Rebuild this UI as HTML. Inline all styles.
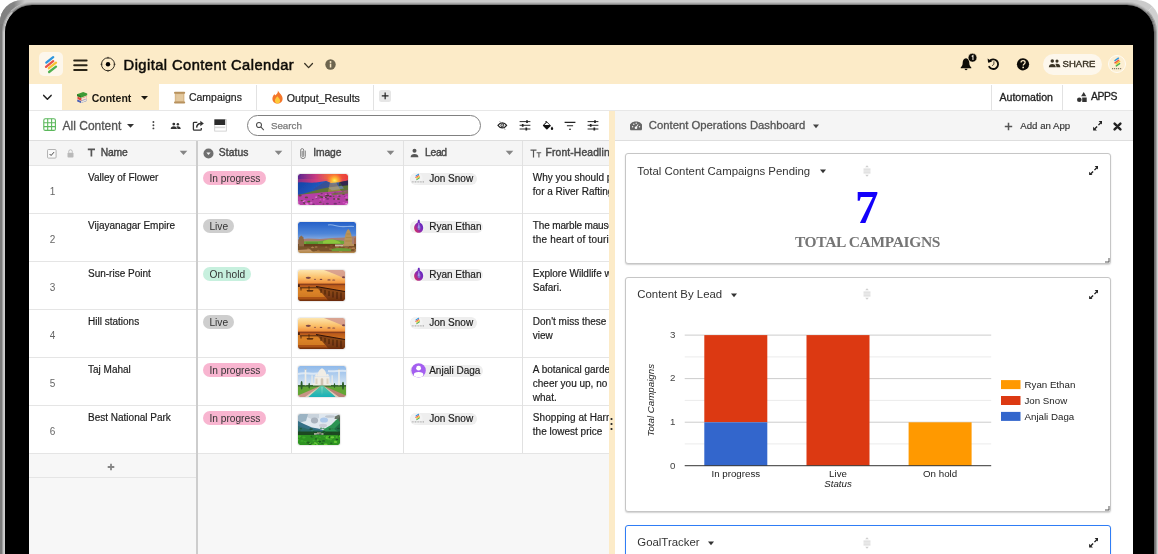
<!DOCTYPE html>
<html><head><meta charset="utf-8">
<style>
*{box-sizing:border-box;margin:0;padding:0}
html,body{width:1158px;height:554px;overflow:hidden;background:#fff}
body{font-family:"Liberation Sans",sans-serif;position:relative;color:#222}
.a{position:absolute}
.bezel{left:5px;top:5px;width:1149px;height:700px;border-radius:27px;background:#000}
.screen{left:29px;top:45px;width:1104px;height:509px;overflow:hidden;background:#fff}
.pg{left:-29px;top:-45px;width:1158px;height:554px;will-change:transform}
.t{white-space:nowrap;line-height:1}
.hd{font-size:10.600px;color:#484848;-webkit-text-stroke:.42px #484848}
.ct{font-size:10px;color:#1c1c1c;-webkit-text-stroke:.18px #1c1c1c}
.rn{font-size:10px;color:#666}
.pill{height:14px;border-radius:7px;font-size:10.200px;line-height:15.400px;text-align:center;color:#333;white-space:nowrap}
.pill.p{background:#f8b5d0}.pill.g{background:#cecece}.pill.h{background:#c7f0de}
.lp{height:12px;border-radius:6px;background:#eeeeee}
.th{left:298px;height:31px;border-radius:2px;overflow:hidden;box-shadow:0 0 1.500px rgba(0,0,0,.4)}
.av{left:410.400px;width:12px;height:12px;border-radius:6px}
.card{background:#fff;border:1px solid #c6c6c6;border-radius:3px;box-shadow:0 1px 1.500px rgba(0,0,0,.18)}
.ctt{font-size:11.4px;color:#333}
</style></head><body>
<div class="a" style="left:0;top:0;width:1159px;height:700px;border-radius:22px;border:12px solid;border-color:#cbcbcb #d0d0d0 #cbcbcb #7b7b7b"></div><div class="a" style="left:0;top:0;width:27px;height:24px;border-top-left-radius:22px 22px;background:linear-gradient(90deg,#7f7f7f 0,#858585 14px,#cbcbcb 25px)"></div><div class="a" style="left:2px;top:2px;width:1155px;height:700px;border-radius:30px;border:1px solid;border-color:#bcbcbc #a6a6a6 #bcbcbc #a0a0a0"></div><div class="a" style="left:3px;top:3px;width:1153px;height:700px;border-radius:29px;border:1px solid;border-color:#a5a5a5 #7f7f7f #a5a5a5 #c4c4c4"></div><div class="a" style="left:4px;top:4px;width:1151px;height:700px;border-radius:28px;border:1px solid;border-color:#7d7d7d #6c6c6c #7d7d7d #cdcdcd"></div>
<div class="a bezel"></div>
<svg width="0" height="0" style="position:absolute"><defs>
<filter id="b5" x="-5%" y="-5%" width="110%" height="110%"><feGaussianBlur stdDeviation=".55"/></filter>
<filter id="b9" x="-5%" y="-5%" width="110%" height="110%"><feGaussianBlur stdDeviation=".9"/></filter>
<linearGradient id="g1s" x1="0" x2="1" y1="0" y2="0"><stop offset="0" stop-color="#5c2590"/><stop offset=".35" stop-color="#c83a80"/><stop offset=".62" stop-color="#f46b3c"/><stop offset="1" stop-color="#ea3d3a"/></linearGradient>
<radialGradient id="g1sun" cx="36.600" cy="6.800" r="8.500" gradientUnits="userSpaceOnUse"><stop offset="0" stop-color="#fff27a"/><stop offset=".22" stop-color="#ffd23a"/><stop offset=".6" stop-color="#ff9a30" stop-opacity=".75"/><stop offset="1" stop-color="#f46b3c" stop-opacity="0"/></radialGradient>
<linearGradient id="g1m" x1="0" x2="1" y1="0" y2=".3"><stop offset="0" stop-color="#1443a6"/><stop offset=".5" stop-color="#2158bd"/><stop offset="1" stop-color="#4a6aa8"/></linearGradient>
<linearGradient id="g2s" x1="0" x2="0" y1="0" y2="1"><stop offset="0" stop-color="#2560c8"/><stop offset=".38" stop-color="#4f86d8"/><stop offset=".6" stop-color="#8fb0e0"/><stop offset="1" stop-color="#8fb0e0"/></linearGradient>
<linearGradient id="g3s" x1="0" x2="0" y1="0" y2="1"><stop offset="0" stop-color="#fde6b0"/><stop offset=".5" stop-color="#fbc06a"/><stop offset="1" stop-color="#ee8230"/></linearGradient>
<linearGradient id="g3w" x1="0" x2="0" y1="0" y2="1"><stop offset="0" stop-color="#b4541a"/><stop offset=".45" stop-color="#d27322"/><stop offset="1" stop-color="#93400f"/></linearGradient>
<linearGradient id="g5s" x1="0" x2="0" y1="0" y2="1"><stop offset="0" stop-color="#8fb9ea"/><stop offset="1" stop-color="#dbe8f3"/></linearGradient>
<linearGradient id="g5p" x1="0" x2="0" y1="0" y2="1"><stop offset="0" stop-color="#5fc8a8"/><stop offset="1" stop-color="#18b0b8"/></linearGradient>
</defs></svg>
<div class="a screen"><div class="a pg">
<!--HEADER-->
<div class="a" style="left:29px;top:45px;width:1104px;height:39px;background:#fcebc8"></div>
<div class="a" style="left:39px;top:52px;width:24px;height:24px;border-radius:5px;background:#fdf7ec"></div>
<svg class="a" style="left:39px;top:52px" width="24" height="24" viewBox="39 52 24 24" stroke-width="2.3" stroke-linecap="round">
<line x1="46.3" y1="62.6" x2="53.2" y2="57.2" stroke="#2e96de"/><line x1="46" y1="66.8" x2="53.2" y2="61.2" stroke="#ea5348"/>
<line x1="48.9" y1="68.2" x2="56" y2="62.6" stroke="#f8c331"/><line x1="49.1" y1="72" x2="56" y2="66.6" stroke="#4fb14f"/></svg>
<svg class="a" style="left:73px;top:59px" width="15" height="13" viewBox="0 0 15 13" stroke="#2a2416" stroke-width="2" stroke-linecap="round"><line x1="1.2" y1="1.6" x2="13.6" y2="1.6"/><line x1="1.2" y1="6.3" x2="13.6" y2="6.3"/><line x1="1.2" y1="11" x2="13.6" y2="11"/></svg>
<svg class="a" style="left:100px;top:56px" width="16" height="16" viewBox="0 0 16 16" fill="none" stroke="#1c1810" stroke-width="0.9"><circle cx="8" cy="8.3" r="6.5"/><circle cx="8" cy="8.3" r="2.2" fill="#000" stroke="none"/><path d="M8 .8v2M8 13.8v2M.5 8.3h2M13.5 8.3h2" stroke-width="0.7"/></svg>
<div class="a t" id="title" style="left:123.600px;top:57.700px;font-size:14.700px;letter-spacing:.44px;color:#0e0c08;-webkit-text-stroke:0.5px #0e0c08">Digital Content Calendar</div>
<svg class="a" style="left:303px;top:61px" width="11" height="9" viewBox="0 0 11 9" fill="none" stroke="#3a3426" stroke-width="1.3" stroke-linecap="round" stroke-linejoin="round"><path d="M1.7 2.5 5.6 6.6 9.5 2.5"/></svg>
<svg class="a" style="left:325px;top:59px" width="11" height="11" viewBox="0 0 11 11"><circle cx="5.5" cy="5.5" r="5.2" fill="#6d654f"/><rect x="4.8" y="4.6" width="1.5" height="3.9" fill="#fcebc8"/><circle cx="5.55" cy="3" r=".95" fill="#fcebc8"/></svg>
<!--bell-->
<svg class="a" style="left:958px;top:52px" width="22" height="20" viewBox="958 52 22 20"><path d="M966 58.2c-2.3.5-3.3 2.300-3.3 4.400 0 2.600-.7 3.700-2 4.800v.9h10.600v-.9c-1.300-1.100-2-2.200-2-4.800 0-2.100-1-3.900-3.300-4.400z" fill="#0d0b07"/><path d="M964.600 68.800a1.450 1.450 0 0 0 2.900 0z" fill="#0d0b07"/><circle cx="972.500" cy="57.700" r="4.400" fill="#0d0b07" stroke="#fcebc8" stroke-width=".6"/><path d="M971.700 56.500l1.250-.95v4.500" stroke="#f4efe4" stroke-width="1.050" fill="none"/></svg>
<!--history-->
<svg class="a" style="left:985px;top:56px" width="17" height="17" viewBox="985 56 17 17" fill="none" stroke="#0d0b07" stroke-width="1.850" stroke-linecap="round"><path d="M989.500 61.200a4.800 4.800 0 1 1-.3 5.500"/><path d="M987.600 58.400l.5 4.300 4-1.100z" fill="#0d0b07" stroke="none"/><path d="M993.900 61.700v2.600l-1.500 1.200" stroke-width="1" stroke="#4c4535"/></svg>
<!--help-->
<svg class="a" style="left:1016px;top:57px" width="14" height="14" viewBox="0 0 14 14"><circle cx="7" cy="7.300" r="6.100" fill="#0d0b07"/><path d="M5 5.600c0-1.300.9-2 2.050-2 1.150 0 2.050.7 2.050 1.800 0 1.500-1.900 1.500-1.900 3" stroke="#fcebc8" stroke-width="1.250" fill="none"/><circle cx="7.150" cy="10.400" r=".85" fill="#fcebc8"/></svg>
<!--share-->
<div class="a" style="left:1042.500px;top:54px;width:59.500px;height:20.700px;border-radius:11px;background:#fdf7ec"></div>
<svg class="a" style="left:1048px;top:59px" width="13" height="9" viewBox="0 0 13 9" fill="#3a3324"><circle cx="4.300" cy="2.100" r="1.750"/><circle cx="9" cy="2.100" r="1.550"/><path d="M.8 8.300c0-2.300 1.500-3.400 3.500-3.400s3.500 1.100 3.500 3.400z"/><path d="M8.400 8.300c0-1.500-.4-2.500-1.200-3.200.5-.2 1.100-.3 1.800-.3 1.900 0 3.300 1 3.300 3.500z"/></svg>
<div class="a t" id="share" style="left:1062.600px;top:59.300px;font-size:9.5px;letter-spacing:0;color:#3a3324;-webkit-text-stroke:0.4px #3a3324">SHARE</div>
<!--avatar-->
<div class="a" style="left:1108px;top:55.400px;width:18px;height:18px;border-radius:9px;background:#fcefd3;border:1px solid #fffcf4"></div>
<svg class="a" style="left:1108px;top:55px" width="18" height="18" viewBox="1108 55 18 18" stroke-width="1.500" stroke-linecap="round"><line x1="1115" y1="60.500" x2="1118.400" y2="58.200" stroke="#2e96de"/><line x1="1115" y1="62.800" x2="1118.600" y2="60.300" stroke="#ea5348"/><line x1="1116.200" y1="63.800" x2="1119.600" y2="61.400" stroke="#f8c331"/><line x1="1116.300" y1="65.900" x2="1119.600" y2="63.600" stroke="#4fb14f"/><line x1="1112" y1="68.700" x2="1122" y2="68.700" stroke="#6a6250" stroke-width="1" stroke-dasharray="1.200 .8" stroke-linecap="butt"/></svg>
<!--TABS-->
<div class="a" style="left:29px;top:84px;width:1104px;height:26px;background:#fff"></div>
<div class="a" style="left:29px;top:110px;width:1104px;height:1px;background:#e7e7e7"></div>
<svg class="a" style="left:42px;top:93px" width="11" height="9" viewBox="0 0 11 9" fill="none" stroke="#222" stroke-width="1.5" stroke-linecap="round" stroke-linejoin="round"><path d="M1.700 2.400 5.400 6.200 9.100 2.400"/></svg>
<div class="a" style="left:62px;top:84px;width:97.200px;height:26px;background:#fcebc8"></div>
<!--books emoji-->
<svg class="a" style="left:76px;top:91px" width="12" height="13" viewBox="0 0 12 13"><path d="M1 3.300 7.200.9l4 1.600v1.700L5 6.700 1 5z" fill="#3d9b35"/><path d="M1 3.300 5 5v1.700L1 5z" fill="#2c7a27"/><path d="M1.500 5.600 5.300 7.200l5.400-2v2.400L5.300 9.700 1.500 8z" fill="#d8433b"/><path d="M5.300 7.400l5.400-2v2L5.300 9.500z" fill="#efe7d8"/><path d="M1.200 8.400 5 10l5.600-2.100v2L5 12.100 1.200 10.400z" fill="#4b5fb5"/><path d="M5 10.200l5.600-2.100v1.600L5 11.900z" fill="#e9e4da"/></svg>
<div class="a t" id="tContent" style="left:91.700px;top:93px;font-size:10.5px;font-weight:700;color:#1a1710">Content</div>
<svg class="a" style="left:140px;top:95px" width="9" height="6" viewBox="0 0 9 6"><path d="M1 1h7L4.500 4.800z" fill="#1a1710"/></svg>
<!--scroll emoji-->
<svg class="a" style="left:173px;top:91px" width="13" height="13" viewBox="0 0 13 13"><rect x="1.800" y="1.200" width="9.600" height="10.800" rx="1" fill="#d9b98a"/><rect x="1" y=".8" width="11.200" height="2" rx="1" fill="#b8925e"/><rect x="1" y="10.400" width="11.200" height="2" rx="1" fill="#b8925e"/><rect x="3.200" y="3.200" width="6.800" height="6.800" fill="#e3c89d"/></svg>
<div class="a t" id="tCamp" style="left:189px;top:93px;font-size:10.46px;color:#222;-webkit-text-stroke:.2px #222">Campaigns</div>
<div class="a" style="left:255.500px;top:85px;width:1px;height:25px;background:#e2e2e2"></div>
<!--fire emoji-->
<svg class="a" style="left:271px;top:90px" width="13" height="14" viewBox="0 0 13 14"><path d="M6.800.6c.6 2.200-1.100 3.300-2.300 4.700C3.500 4.900 3.600 4 3.600 4 2.300 5.300 1.400 7 1.400 8.700c0 2.800 2.200 4.800 5.100 4.800s5.100-2 5.100-4.800c0-3.700-3.200-5-4.800-8.100z" fill="#f4772a"/><path d="M6.500 6.200c-1.400 1.500-2.600 2.700-2.600 4.500 0 1.500 1.100 2.700 2.600 2.700s2.600-1.200 2.600-2.700c0-1.800-1.400-2.800-2.600-4.500z" fill="#fdc93a"/></svg>
<div class="a t" id="tOut" style="left:286.800px;top:93px;font-size:10.62px;color:#222;-webkit-text-stroke:.2px #222">Output_Results</div>
<div class="a" style="left:373px;top:85px;width:1px;height:25px;background:#e2e2e2"></div>
<div class="a" style="left:379.300px;top:90.200px;width:11.700px;height:11.500px;border-radius:2.500px;background:#e6e6e6"></div>
<svg class="a" style="left:380px;top:91px" width="10" height="10" viewBox="0 0 10 10" stroke="#222" stroke-width="1.200"><path d="M5.150 1.600v6.700M1.800 4.950h6.700"/></svg>
<div class="a" style="left:991px;top:85px;width:1px;height:25px;background:#e2e2e2"></div>
<div class="a" style="left:1061.500px;top:85px;width:1px;height:25px;background:#e2e2e2"></div>
<div class="a t" id="tAuto" style="left:999.500px;top:92.300px;font-size:10.57px;color:#222;-webkit-text-stroke:.3px #222">Automation</div>
<svg class="a" style="left:1076px;top:91px" width="12" height="12" viewBox="0 0 12 12" fill="#333"><path d="M7.700 1 10.300 5.200H5.100z"/><circle cx="3.300" cy="8.700" r="2.300"/><rect x="6.200" y="6.500" width="4.500" height="4.500"/></svg>
<div class="a t" id="tApps" style="left:1091px;top:92.300px;font-size:10.400px;color:#222;letter-spacing:-.42px;-webkit-text-stroke:.3px #222">APPS</div>
<!--TOOLBAR-->
<div class="a" style="left:29px;top:111px;width:581px;height:29px;background:#fff"></div>
<div class="a" style="left:29px;top:140px;width:581px;height:1px;background:#dedede"></div>
<svg class="a" style="left:43px;top:118px" width="13" height="13" viewBox="0 0 13 13" fill="none" stroke="#5cb85c" stroke-width="1.100"><rect x=".8" y=".8" width="11.600" height="11.600" rx="1.500"/><path d="M4.700.8v11.600M8.600.8v11.600M.8 4.700h11.600M.8 8.600h11.600"/></svg>
<div class="a t" id="allc" style="left:62.600px;top:119.500px;font-size:12px;color:#555;-webkit-text-stroke:.3px #555">All Content</div>
<svg class="a" style="left:125.500px;top:122.500px" width="9" height="6" viewBox="0 0 9 6"><path d="M1 1h7L4.500 4.800z" fill="#333"/></svg>
<svg class="a" style="left:151px;top:119px" width="5" height="12" viewBox="0 0 5 12" fill="#444"><circle cx="2.400" cy="3" r=".95"/><circle cx="2.400" cy="6.200" r=".95"/><circle cx="2.400" cy="9.400" r=".95"/></svg>
<svg class="a" style="left:170px;top:121.500px" width="11.500" height="8" viewBox="0 0 13 9" fill="#333"><circle cx="4.300" cy="2.300" r="1.600"/><circle cx="8.900" cy="2.500" r="1.400"/><path d="M.8 8c0-2.100 1.500-3.100 3.500-3.100s3.500 1 3.500 3.100z"/><path d="M8.400 8c0-1.300-.4-2.200-1.100-2.900.4-.2 1-.3 1.600-.3 1.800 0 3.200.9 3.200 3.200z"/></svg>
<svg class="a" style="left:192px;top:118.500px" width="13" height="13" viewBox="0 0 13 13" fill="none" stroke="#333" stroke-width="1.300"><path d="M5.300 3.300H2.300a.9.900 0 0 0-.9.900v6.100a.9.900 0 0 0 .9.900h6.100a.9.900 0 0 0 .9-.9V9"/><path d="M4.600 8.600c.2-2.600 1.700-4.100 4.300-4.200" stroke-width="1.500"/><path d="M8.300 1.700 11.800 4.500 8.300 7.300z" fill="#333" stroke="none"/></svg>
<svg class="a" style="left:214px;top:119px" width="13" height="13" viewBox="0 0 13 13"><rect x=".7" y=".6" width="11.600" height="11.500" fill="#fff" stroke="#c9c9c9" stroke-width=".8"/><rect x=".4" y=".4" width="10.800" height="5.600" fill="#2b2b2b"/><rect x=".7" y="7.600" width="10.500" height="1.600" fill="#d9d9d9"/></svg>
<div class="a" style="left:246.600px;top:114.700px;width:234.600px;height:21.500px;border-radius:11px;border:1.700px solid #808080;background:#fff"></div>
<svg class="a" style="left:254.500px;top:120.500px" width="10" height="10" viewBox="0 0 10 10" fill="none" stroke="#4a4a4a" stroke-width="1.050"><circle cx="4" cy="4" r="2.500"/><path d="M6 6.100 8.600 8.800" stroke-linecap="round"/></svg>
<div class="a t" id="srch" style="left:270.900px;top:120.500px;font-size:9.8px;color:#7a7a7a;-webkit-text-stroke:.25px #7a7a7a">Search</div>
<!--eye slash-->
<svg class="a" style="left:497px;top:119px" width="11" height="12" viewBox="0 0 11 12" fill="none" stroke="#222"><path d="M1 6.300C2.200 4.500 3.700 3.800 5.300 3.800S8.400 4.500 9.600 6.300C8.400 8.100 6.900 8.800 5.300 8.800S2.200 8.100 1 6.300z" stroke-width="1.200"/><circle cx="5.300" cy="6.300" r="1.400" stroke-width="1"/><path d="M2.600 2 8.300 11" stroke-width=".6" stroke="#777"/></svg>
<svg class="a sl" style="left:519px;top:120px" width="12" height="11" viewBox="0 0 12 11" stroke="#222" fill="none"><path d="M.6 1.600h10.800M.6 5.300h10.800M.6 9h10.800" stroke-width=".95"/><path d="M8 .2v2.800M3.700 3.900v2.800M7.300 7.600v2.800" stroke-width="1.700"/></svg>
<svg class="a" style="left:541.500px;top:120px" width="12" height="11" viewBox="0 0 12 11"><path d="M4.300 1 9 5.700 5.400 9.300a.8.800 0 0 1-1.100 0L1.100 6.100a.8.800 0 0 1 0-1.100L4 2.100 3 1.100z" fill="#111"/><path d="M2.300 5h5.200L4.900 2.500z" fill="#fff"/><path d="M10 6.600s1.200 1.400 1.200 2.200a1.200 1.200 0 0 1-2.400 0c0-.8 1.200-2.200 1.200-2.200z" fill="#111"/></svg>
<svg class="a" style="left:564px;top:120px" width="12" height="11" viewBox="0 0 12 11" stroke="#222" stroke-width="1.100" fill="none"><path d="M.6 2.400h10.800M2.900 5.800h6.200M5 9.200h2"/></svg>
<svg class="a sl" style="left:586.500px;top:120px" width="12" height="11" viewBox="0 0 12 11" stroke="#222" fill="none"><path d="M.6 1.600h10.800M.6 5.300h10.800M.6 9h10.800" stroke-width=".95"/><path d="M8 .2v2.800M3.700 3.900v2.800M7.300 7.600v2.800" stroke-width="1.700"/></svg>
<!--TABLE-->
<div class="a" style="left:29px;top:141px;width:581px;height:413px;background:#f7f7f7"></div>
<div class="a" style="left:29px;top:141px;width:581px;height:24px;background:#f5f5f5"></div>
<div class="a" style="left:29px;top:165px;width:581px;height:288px;background:#fff"></div>
<div class="a" style="left:29px;top:165px;width:581px;height:1px;background:#e5e5e5"></div>
<div class="a" style="left:29px;top:213px;width:581px;height:1px;background:#e5e5e5"></div>
<div class="a" style="left:29px;top:261px;width:581px;height:1px;background:#e5e5e5"></div>
<div class="a" style="left:29px;top:309px;width:581px;height:1px;background:#e5e5e5"></div>
<div class="a" style="left:29px;top:357px;width:581px;height:1px;background:#e5e5e5"></div>
<div class="a" style="left:29px;top:405px;width:581px;height:1px;background:#e5e5e5"></div>
<div class="a" style="left:29px;top:453px;width:581px;height:1px;background:#e5e5e5"></div>
<div class="a" style="left:29px;top:477px;width:168px;height:1px;background:#e5e5e5"></div>
<div class="a" style="left:290.5px;top:141px;width:1px;height:312px;background:#e1e1e1"></div>
<div class="a" style="left:403px;top:141px;width:1px;height:312px;background:#e1e1e1"></div>
<div class="a" style="left:522px;top:141px;width:1px;height:312px;background:#e1e1e1"></div>
<div class="a" style="left:196px;top:141px;width:2px;height:413px;background:#cdcdcd"></div>
<svg class="a" style="left:47px;top:148.800px" width="9.800" height="9.800" viewBox="0 0 11 11" fill="none"><rect x=".6" y=".6" width="9.600" height="9.600" rx="1" stroke="#a9a9a9" stroke-width="1" fill="#fafafa"/><path d="M2.900 5.600 4.600 7.300 7.900 3.500" stroke="#444" stroke-width="1.100"/></svg>
<svg class="a" style="left:66.500px;top:149px" width="7" height="9" viewBox="0 0 7 9"><rect x=".5" y="3.700" width="6" height="4.800" rx=".8" fill="#b9b9b9"/><path d="M1.700 3.700V2.600a1.800 1.800 0 0 1 3.600 0v1.100" stroke="#b9b9b9" stroke-width="1" fill="none"/></svg>
<svg class="a" style="left:86.500px;top:148.300px" width="9" height="9" viewBox="0 0 9 9" stroke="#555" stroke-width="1.700" fill="none"><path d="M.8 1.300h7.200M4.400 1.300v7.200"/></svg>
<div class="a t hd" id="hName" style="font-size:10.300px;letter-spacing:-0.2px;left:100.800px;top:147.500px">Name</div>
<svg class="a" style="left:178.500px;top:149.800px" width="9" height="6" viewBox="0 0 9 6"><path d="M.7.800h7.600L4.500 5z" fill="#858585"/></svg>
<svg class="a" style="left:203px;top:148px" width="11" height="11" viewBox="0 0 11 11"><circle cx="5.500" cy="5.500" r="5" fill="#6f6f6f"/><path d="M3.400 4.600h4.200L5.500 7z" fill="#f5f5f5"/></svg>
<div class="a t hd" id="hStatus" style="font-size:10.300px;letter-spacing:0.11px;left:218.700px;top:147.500px">Status</div>
<svg class="a" style="left:273.500px;top:149.800px" width="9" height="6" viewBox="0 0 9 6"><path d="M.7.800h7.600L4.500 5z" fill="#858585"/></svg>
<svg class="a" style="left:299px;top:147px" width="8" height="13" viewBox="0 0 8 13" fill="none" stroke="#777" stroke-width=".9"><path d="M6.300 3.600v5.700a2.300 2.300 0 0 1-4.600 0V3.100a1.500 1.500 0 0 1 3 0v5.700a.75.750 0 0 1-1.500 0V3.900"/></svg>
<div class="a t hd" id="hImage" style="font-size:10.300px;letter-spacing:-0.13px;left:313.300px;top:147.500px">Image</div>
<svg class="a" style="left:385.500px;top:149.800px" width="9" height="6" viewBox="0 0 9 6"><path d="M.7.800h7.600L4.500 5z" fill="#858585"/></svg>
<svg class="a" style="left:410px;top:148px" width="9" height="10" viewBox="0 0 9 10" fill="#555"><circle cx="4.500" cy="2.800" r="2"/><path d="M.6 9.200c0-2.300 1.700-3.300 3.900-3.300s3.900 1 3.900 3.300z"/></svg>
<div class="a t hd" id="hLead" style="font-size:10.300px;letter-spacing:-0.28px;left:425px;top:147.500px">Lead</div>
<svg class="a" style="left:505px;top:149.800px" width="9" height="6" viewBox="0 0 9 6"><path d="M.7.800h7.600L4.500 5z" fill="#858585"/></svg>
<svg class="a" style="left:530px;top:149px" width="12" height="9" viewBox="0 0 12 9" stroke="#555" fill="none"><path d="M.5 1.200h6M3.500 1.200v7.300" stroke-width="1.200"/><path d="M6.600 3.800h4.600M8.900 3.800v4.700" stroke-width="1.100"/></svg>
<div class="a t hd" id="hFront" style="font-size:10.300px;letter-spacing:.15px;left:545.500px;top:147.500px">Front-Headline</div>
<div class="a t rn" style="left:46px;top:187.4px;width:13px;text-align:center">1</div>
<div class="a t ct" id="n0" style="left:88px;top:172.9px">Valley of Flower</div>
<div class="a pill p" style="left:203.300px;top:171.3px;width:63.2px"><span id="s0">In progress</span></div>
<div class="a th" id="th0" style="top:174px;width:50px"><svg width="50" height="31" viewBox="0 0 50 31" style="display:block;border-radius:2px"><g filter="url(#b5)"><rect width="50" height="31" fill="url(#g1s)"/><rect y="5" width="50" height="6" fill="#d6457a" opacity=".35"/><rect width="50" height="16" fill="url(#g1sun)"/>
<path d="M0 8.500C6 8 12 9 18 8.500L28 7 33 9 50 7.500V21H0z" fill="url(#g1m)"/>
<path d="M14 16 28 7 35 10.500 50 7V14L30 15z" fill="#3b4f8c" opacity=".8"/><path d="M41 8.500 50 6.500V19l-9-3z" fill="#3a4a2c" opacity=".85"/><path d="M42 8 50 6.500V11l-6 .8z" fill="#33284f"/>
<path d="M0 21C10 19 20 15 30 13.500L50 11.500V22H0z" fill="#5f7434"/><path d="M30 13.500 44 11.800 46 14.500 34 16.500z" fill="#6d86b8" opacity=".75"/>
<path d="M32 8 37 6.500 43 17 30 18z" fill="#f4b64a" opacity=".35"/>
<path d="M0 20.800C12 20 24 18 50 16.500V31H0z" fill="#b540a4"/>
<ellipse cx="6.7" cy="29.5" rx="1.4" ry="0.8" fill="#5a4a34" opacity="0.85"/><ellipse cx="5.9" cy="28.6" rx="1.2" ry="0.7" fill="#6b2f68" opacity="0.85"/><ellipse cx="39.4" cy="19.2" rx="0.7" ry="0.4" fill="#6b2f68" opacity="0.85"/><ellipse cx="21.6" cy="28.3" rx="0.7" ry="0.4" fill="#3f3a2a" opacity="0.85"/><ellipse cx="13.3" cy="28.9" rx="1.3" ry="0.7" fill="#f28be6" opacity="0.85"/><ellipse cx="45.1" cy="17.9" rx="0.7" ry="0.4" fill="#e76ad8" opacity="0.85"/><ellipse cx="47.0" cy="22.5" rx="0.9" ry="0.5" fill="#6b2f68" opacity="0.85"/><ellipse cx="36.3" cy="25.0" rx="1.4" ry="0.8" fill="#3f3a2a" opacity="0.85"/><ellipse cx="27.6" cy="23.2" rx="1.4" ry="0.8" fill="#3f3a2a" opacity="0.85"/><ellipse cx="47.6" cy="30.0" rx="1.1" ry="0.6" fill="#f28be6" opacity="0.85"/><ellipse cx="9.3" cy="30.9" rx="1.5" ry="0.9" fill="#f28be6" opacity="0.85"/><ellipse cx="37.2" cy="29.7" rx="1.7" ry="0.9" fill="#6b2f68" opacity="0.85"/><ellipse cx="25.4" cy="29.9" rx="0.9" ry="0.5" fill="#5a4a34" opacity="0.85"/><ellipse cx="29.4" cy="29.6" rx="1.5" ry="0.9" fill="#6b2f68" opacity="0.85"/><ellipse cx="29.5" cy="19.3" rx="0.9" ry="0.5" fill="#6b2f68" opacity="0.85"/><ellipse cx="20.7" cy="21.6" rx="1.2" ry="0.7" fill="#4f5a2c" opacity="0.85"/><ellipse cx="4.3" cy="27.7" rx="0.8" ry="0.5" fill="#b335a6" opacity="0.85"/><ellipse cx="26.0" cy="23.8" rx="1.2" ry="0.7" fill="#e76ad8" opacity="0.85"/><ellipse cx="23.5" cy="23.0" rx="1.5" ry="0.9" fill="#6b2f68" opacity="0.85"/><ellipse cx="32.4" cy="20.7" rx="0.9" ry="0.5" fill="#e76ad8" opacity="0.85"/><ellipse cx="38.5" cy="25.0" rx="1.5" ry="0.9" fill="#d94fc9" opacity="0.85"/><ellipse cx="20.2" cy="23.6" rx="1.5" ry="0.9" fill="#4f5a2c" opacity="0.85"/><ellipse cx="23.0" cy="22.5" rx="1.2" ry="0.7" fill="#e76ad8" opacity="0.85"/><ellipse cx="19.2" cy="29.4" rx="1.6" ry="0.9" fill="#b335a6" opacity="0.85"/><ellipse cx="25.9" cy="25.8" rx="1.1" ry="0.6" fill="#e76ad8" opacity="0.85"/><ellipse cx="24.1" cy="23.6" rx="1.2" ry="0.7" fill="#6b2f68" opacity="0.85"/><ellipse cx="24.2" cy="23.5" rx="1.0" ry="0.6" fill="#4f5a2c" opacity="0.85"/><ellipse cx="22.9" cy="19.8" rx="0.9" ry="0.5" fill="#b335a6" opacity="0.85"/><ellipse cx="27.5" cy="21.2" rx="0.8" ry="0.5" fill="#5a4a34" opacity="0.85"/><ellipse cx="1.6" cy="30.5" rx="0.8" ry="0.4" fill="#e76ad8" opacity="0.85"/><ellipse cx="22.6" cy="28.2" rx="1.0" ry="0.6" fill="#5a4a34" opacity="0.85"/><ellipse cx="5.5" cy="27.3" rx="1.0" ry="0.6" fill="#f28be6" opacity="0.85"/><ellipse cx="8.4" cy="23.4" rx="1.6" ry="0.9" fill="#5a4a34" opacity="0.85"/><ellipse cx="32.4" cy="22.2" rx="1.4" ry="0.8" fill="#3f3a2a" opacity="0.85"/><ellipse cx="23.7" cy="19.6" rx="1.1" ry="0.6" fill="#6b2f68" opacity="0.85"/><ellipse cx="39.8" cy="21.3" rx="0.9" ry="0.5" fill="#d94fc9" opacity="0.85"/><ellipse cx="48.3" cy="23.1" rx="1.7" ry="0.9" fill="#d94fc9" opacity="0.85"/><ellipse cx="0.9" cy="22.8" rx="1.4" ry="0.8" fill="#b335a6" opacity="0.85"/><ellipse cx="22.3" cy="25.3" rx="1.1" ry="0.6" fill="#d94fc9" opacity="0.85"/><ellipse cx="48.8" cy="25.9" rx="1.4" ry="0.8" fill="#3f3a2a" opacity="0.85"/><ellipse cx="11.2" cy="27.3" rx="1.1" ry="0.6" fill="#4f5a2c" opacity="0.85"/><ellipse cx="33.0" cy="23.8" rx="1.4" ry="0.8" fill="#b335a6" opacity="0.85"/><ellipse cx="48.4" cy="29.3" rx="1.0" ry="0.6" fill="#f28be6" opacity="0.85"/><ellipse cx="15.5" cy="30.3" rx="1.4" ry="0.8" fill="#6b2f68" opacity="0.85"/><ellipse cx="28.2" cy="20.5" rx="1.2" ry="0.7" fill="#e76ad8" opacity="0.85"/><ellipse cx="29.5" cy="21.5" rx="1.6" ry="0.9" fill="#3f3a2a" opacity="0.85"/><ellipse cx="8.6" cy="29.6" rx="1.7" ry="0.9" fill="#e76ad8" opacity="0.85"/><ellipse cx="18.9" cy="23.7" rx="0.9" ry="0.5" fill="#6b2f68" opacity="0.85"/><ellipse cx="29.6" cy="24.8" rx="1.6" ry="0.9" fill="#6b2f68" opacity="0.85"/><ellipse cx="14.8" cy="25.6" rx="1.0" ry="0.6" fill="#6b2f68" opacity="0.85"/><ellipse cx="45.0" cy="17.7" rx="0.9" ry="0.5" fill="#4f5a2c" opacity="0.85"/><ellipse cx="40.6" cy="25.3" rx="0.8" ry="0.5" fill="#6b2f68" opacity="0.85"/><ellipse cx="10.7" cy="27.6" rx="1.5" ry="0.9" fill="#4f5a2c" opacity="0.85"/><ellipse cx="45.7" cy="28.8" rx="1.2" ry="0.7" fill="#d94fc9" opacity="0.85"/><ellipse cx="3.3" cy="21.6" rx="0.8" ry="0.5" fill="#b335a6" opacity="0.85"/><ellipse cx="45.5" cy="20.3" rx="1.4" ry="0.8" fill="#5a4a34" opacity="0.85"/><ellipse cx="18.4" cy="23.6" rx="1.0" ry="0.6" fill="#3f3a2a" opacity="0.85"/><ellipse cx="6.8" cy="26.5" rx="0.8" ry="0.5" fill="#e76ad8" opacity="0.85"/><ellipse cx="20.3" cy="24.0" rx="1.7" ry="1.0" fill="#b335a6" opacity="0.85"/><ellipse cx="41.4" cy="22.3" rx="1.3" ry="0.7" fill="#6b2f68" opacity="0.85"/><ellipse cx="3.8" cy="26.6" rx="1.3" ry="0.7" fill="#5a4a34" opacity="0.85"/><ellipse cx="18.2" cy="23.2" rx="1.2" ry="0.7" fill="#f28be6" opacity="0.85"/><ellipse cx="22.9" cy="22.6" rx="1.5" ry="0.8" fill="#5a4a34" opacity="0.85"/><ellipse cx="0.6" cy="27.9" rx="0.8" ry="0.5" fill="#f28be6" opacity="0.85"/><ellipse cx="41.3" cy="28.2" rx="0.9" ry="0.5" fill="#6b2f68" opacity="0.85"/><ellipse cx="8.1" cy="25.4" rx="1.4" ry="0.8" fill="#b335a6" opacity="0.85"/><ellipse cx="37.2" cy="19.5" rx="1.6" ry="0.9" fill="#6b2f68" opacity="0.85"/><ellipse cx="40.3" cy="25.0" rx="1.5" ry="0.9" fill="#5a4a34" opacity="0.85"/><ellipse cx="35.6" cy="22.3" rx="0.9" ry="0.5" fill="#4f5a2c" opacity="0.85"/><ellipse cx="2.0" cy="21.4" rx="1.7" ry="1.0" fill="#5a4a34" opacity="0.85"/><path d="M33 19.500l17-2.500v2.500l-15 1.800z" fill="#6f7a3a" opacity=".75"/></g></svg></div>
<div class="a lp" style="left:410.400px;top:172.8px;width:66.3px"></div><div class="a t ct" id="l0" style="left:429.200px;top:173.5px">Jon Snow</div>
<svg class="a" style="left:410px;top:172px" width="15" height="14" viewBox="410 172 15 14"><circle cx="416.600" cy="178.8" r="6" fill="#f3f3f3"/><g stroke-width="1.050" stroke-linecap="round"><line x1="416" y1="175.9" x2="418.600" y2="174.2" stroke="#2e96de"/><line x1="415.900" y1="177.4" x2="418.700" y2="175.6" stroke="#ea5348"/><line x1="416.700" y1="178.2" x2="419.400" y2="176.5" stroke="#f8c331"/><line x1="416.800" y1="179.6" x2="419.400" y2="177.9" stroke="#4fb14f"/></g><line x1="411.800" y1="181.9" x2="424" y2="181.9" stroke="#8a8a8a" stroke-width=".8" stroke-dasharray="1 .600"/></svg>
<div class="a t ct" id="f0_0" style="left:532.800px;top:173.00px">Why you should plan</div>
<div class="a t ct" id="f0_1" style="left:532.800px;top:186.85px">for a River Rafting</div>
<div class="a t rn" style="left:46px;top:235.4px;width:13px;text-align:center">2</div>
<div class="a t ct" id="n1" style="left:88px;top:220.9px">Vijayanagar Empire</div>
<div class="a pill g" style="left:203.300px;top:219.3px;width:31px"><span id="s1">Live</span></div>
<div class="a th" id="th1" style="top:222px;width:58px"><svg width="58" height="31" viewBox="0 0 58 31" style="display:block;border-radius:2px"><g filter="url(#b5)"><rect width="58" height="31" fill="url(#g2s)"/><path d="M30 3c4-1 8 1 12 1.500 5 .6 9-.5 14 0" stroke="#9fc0ee" stroke-width="1.100" fill="none" opacity=".8"/>
<path d="M0 17.500 10 16.500 22 17 34 16 46 15.500 58 14V22H0z" fill="#a77f72"/>
<path d="M5 19.500C12 18.500 20 20 26 18.500 32 17 40 18 46 19V23H5z" fill="#6aa838"/><path d="M25 19.500c3-2 8-2.500 12-1.500 3 .8 5 1.800 6 3.500H25z" fill="#8cc63c"/><path d="M8 20.300h12v2H8z" fill="#4f8f2c" opacity=".7"/>
<rect y="22" width="58" height="9" fill="#7a522c"/><rect y="22" width="58" height="2.500" fill="#68401f"/>
<ellipse cx="55.4" cy="30.1" rx="0.9" ry="0.5" fill="#8a5530" opacity="0.7"/><ellipse cx="20.9" cy="24.7" rx="1.9" ry="1.1" fill="#7a4a2a" opacity="0.7"/><ellipse cx="14.6" cy="25.0" rx="0.9" ry="0.5" fill="#b07a45" opacity="0.7"/><ellipse cx="58.0" cy="28.0" rx="1.9" ry="1.1" fill="#c0905a" opacity="0.7"/><ellipse cx="55.1" cy="27.3" rx="1.4" ry="0.8" fill="#7a4a2a" opacity="0.7"/><ellipse cx="52.3" cy="29.6" rx="1.3" ry="0.7" fill="#7a4a2a" opacity="0.7"/><ellipse cx="52.6" cy="26.5" rx="2.0" ry="1.1" fill="#b07a45" opacity="0.7"/><ellipse cx="32.5" cy="25.2" rx="0.9" ry="0.5" fill="#7a4a2a" opacity="0.7"/><ellipse cx="10.1" cy="27.1" rx="1.3" ry="0.7" fill="#c0905a" opacity="0.7"/><ellipse cx="39.1" cy="24.8" rx="2.0" ry="1.1" fill="#a8703c" opacity="0.7"/><ellipse cx="42.6" cy="29.8" rx="1.8" ry="1.0" fill="#c0905a" opacity="0.7"/><ellipse cx="20.5" cy="30.4" rx="2.1" ry="1.2" fill="#b07a45" opacity="0.7"/><ellipse cx="55.4" cy="26.3" rx="1.8" ry="1.0" fill="#c0905a" opacity="0.7"/><ellipse cx="14.5" cy="25.5" rx="1.5" ry="0.8" fill="#c0905a" opacity="0.7"/><ellipse cx="48.2" cy="26.0" rx="2.0" ry="1.1" fill="#a8703c" opacity="0.7"/><ellipse cx="20.3" cy="28.6" rx="1.5" ry="0.9" fill="#a8703c" opacity="0.7"/><ellipse cx="28.2" cy="25.1" rx="1.2" ry="0.7" fill="#b07a45" opacity="0.7"/><ellipse cx="50.8" cy="27.8" rx="1.8" ry="1.0" fill="#a8703c" opacity="0.7"/><ellipse cx="18.0" cy="30.2" rx="1.7" ry="1.0" fill="#c0905a" opacity="0.7"/><ellipse cx="32.6" cy="27.1" rx="1.6" ry="0.9" fill="#a8703c" opacity="0.7"/><ellipse cx="18.1" cy="25.0" rx="1.5" ry="0.8" fill="#c0905a" opacity="0.7"/><ellipse cx="51.2" cy="29.0" rx="1.3" ry="0.7" fill="#8a5530" opacity="0.7"/><ellipse cx="52.6" cy="24.8" rx="1.8" ry="1.0" fill="#8a5530" opacity="0.7"/><ellipse cx="33.3" cy="23.8" rx="1.6" ry="0.9" fill="#8a5530" opacity="0.7"/><ellipse cx="43.8" cy="24.5" rx="1.2" ry="0.7" fill="#b07a45" opacity="0.7"/><ellipse cx="54.7" cy="23.9" rx="2.0" ry="1.1" fill="#8a5530" opacity="0.7"/><path d="M0 31V28L12 27.200 16 31z" fill="#c09565"/><path d="M33 27c5-1.500 12-1.500 20 0v2.300H34z" fill="#6c9a35"/><path d="M37 22.500h14v1.800H37z" fill="#d8cdb8" opacity=".85"/><path d="M0 29.500h58V31H0z" fill="#b68a4e"/>
<path d="M46.500 24V17l1-5 1.300-3.300 1.500-1.600 1.500 1.600 1.300 3.300 1 5v7z" fill="#b8935a"/><path d="M48.500 12h4M47.800 15.500h5.600M47.300 19h6.500" stroke="#a8853f" stroke-width=".7"/><path d="M45 24h11v-2H45z" fill="#b8915a"/>
<path d="M.6 24.500V18l.8-2.700L3.300 13.600l1.900 1.700.8 2.700v6.500z" fill="#8f6a45"/><path d="M56 16.500 58 15v7h-2z" fill="#a86a4e"/></g></svg></div>
<div class="a lp" style="left:410.400px;top:220.8px;width:72.5px"></div><div class="a t ct" id="l1" style="left:429.200px;top:221.5px">Ryan Ethan</div>
<svg class="a" style="left:411px;top:219px" width="14" height="15" viewBox="0 0 14 15"><defs><linearGradient id="ry213" x1="0" x2="1" y1="1" y2="0"><stop offset="0" stop-color="#e8324e"/><stop offset=".45" stop-color="#8a2ab4"/><stop offset="1" stop-color="#4a2ac8"/></linearGradient></defs><circle cx="7.600" cy="7.900" r="6" fill="#f3f3f3"/><path d="M6.900 1.200c.5-.6 1.400-.6 1.800 0l.2 2.200c2 .9 3.300 3 3.300 5.300 0 3-2 5-4.500 5s-4.600-2-4.600-5c0-2.300 1.400-4.300 3.500-5.300z" fill="url(#ry213)"/><ellipse cx="8" cy="8.600" rx="1.500" ry="2.600" fill="#7ab0f0" opacity=".55"/><path d="M7.800 4v5" stroke="#e8d8ff" stroke-width=".7" opacity=".8"/></svg>
<div class="a t ct" id="f1_0" style="letter-spacing:-.15px;left:532.800px;top:221.00px">The marble mausoleum</div>
<div class="a t ct" id="f1_1" style="letter-spacing:.18px;left:532.800px;top:234.85px">the heart of tourism</div>
<div class="a t rn" style="left:46px;top:283.4px;width:13px;text-align:center">3</div>
<div class="a t ct" id="n2" style="left:88px;top:268.9px">Sun-rise Point</div>
<div class="a pill h" style="left:203.300px;top:267.3px;width:48px"><span id="s2">On hold</span></div>
<div class="a th" id="th2" style="top:270px;width:47px"><svg width="47" height="31" viewBox="0 0 47 31" style="display:block;border-radius:2px"><g filter="url(#b5)"><rect width="47" height="15" fill="url(#g3s)"/><path d="M26 0H47V9C42 6 34 3 26 0z" fill="#cf948c" opacity=".8"/>
<g fill="#6a3540" opacity=".85"><ellipse cx="10.300" cy="7.800" rx="2.600" ry="1.100"/><ellipse cx="23" cy="9.400" rx="1.300" ry=".6"/><ellipse cx="31" cy="9.900" rx="1.700" ry=".7"/><ellipse cx="35.700" cy="10" rx="1.600" ry=".6"/><ellipse cx="45.500" cy="7.300" rx="1.500" ry="1"/><ellipse cx="17" cy="9.200" rx="1" ry=".5"/></g>
<rect y="14" width="47" height="17" fill="url(#g3w)"/><rect y="13.600" width="47" height="1.500" fill="#8c3f1a"/>
<path d="M0 17h20l10 14H0z" fill="#e08a2a" opacity=".7"/><path d="M0 27H27L30 31H0z" fill="#9a3f10" opacity=".65"/>
<path d="M18 16.500 47 21.500V31H31z" fill="#5a2a10" opacity=".62"/><path d="M18 16.500 47 21.500" stroke="#2f1206" stroke-width="1"/><path d="M0 29.500h47V31H0z" fill="#6a2a0c" opacity=".8"/><path d="M2 17.800H20" stroke="#3a1a0c" stroke-width=".9"/><path d="M8.500 20.200h7l-.8 1.300H9.300z" fill="#3a1608"/><path d="M11 16v4.300" stroke="#3a1608" stroke-width=".6"/>
<path d="M23 19v4M27 20v4.500M31 21v5M35 21.500v6M39 22v7M43 22.500v7" stroke="#3a1808" stroke-width="1" opacity=".85"/><path d="M0 14.500h1.800v2.500H0z" fill="#4a200c"/><path d="M3 18v2.500" stroke="#3a1608" stroke-width=".8"/></g></svg></div>
<div class="a lp" style="left:410.400px;top:268.8px;width:72.5px"></div><div class="a t ct" id="l2" style="left:429.200px;top:269.5px">Ryan Ethan</div>
<svg class="a" style="left:411px;top:267px" width="14" height="15" viewBox="0 0 14 15"><defs><linearGradient id="ry261" x1="0" x2="1" y1="1" y2="0"><stop offset="0" stop-color="#e8324e"/><stop offset=".45" stop-color="#8a2ab4"/><stop offset="1" stop-color="#4a2ac8"/></linearGradient></defs><circle cx="7.600" cy="7.900" r="6" fill="#f3f3f3"/><path d="M6.900 1.200c.5-.6 1.400-.6 1.800 0l.2 2.200c2 .9 3.300 3 3.300 5.300 0 3-2 5-4.500 5s-4.600-2-4.600-5c0-2.300 1.400-4.300 3.500-5.300z" fill="url(#ry261)"/><ellipse cx="8" cy="8.600" rx="1.500" ry="2.600" fill="#7ab0f0" opacity=".55"/><path d="M7.800 4v5" stroke="#e8d8ff" stroke-width=".7" opacity=".8"/></svg>
<div class="a t ct" id="f2_0" style="left:532.800px;top:269.00px">Explore Wildlife with</div>
<div class="a t ct" id="f2_1" style="left:532.800px;top:282.85px">Safari.</div>
<div class="a t rn" style="left:46px;top:331.4px;width:13px;text-align:center">4</div>
<div class="a t ct" id="n3" style="left:88px;top:316.9px">Hill stations</div>
<div class="a pill g" style="left:203.300px;top:315.3px;width:31px"><span id="s3">Live</span></div>
<div class="a th" id="th3" style="top:318px;width:47px"><svg width="47" height="31" viewBox="0 0 47 31" style="display:block;border-radius:2px"><g filter="url(#b5)"><rect width="47" height="15" fill="url(#g3s)"/><path d="M26 0H47V9C42 6 34 3 26 0z" fill="#cf948c" opacity=".8"/>
<g fill="#6a3540" opacity=".85"><ellipse cx="10.300" cy="7.800" rx="2.600" ry="1.100"/><ellipse cx="23" cy="9.400" rx="1.300" ry=".6"/><ellipse cx="31" cy="9.900" rx="1.700" ry=".7"/><ellipse cx="35.700" cy="10" rx="1.600" ry=".6"/><ellipse cx="45.500" cy="7.300" rx="1.500" ry="1"/><ellipse cx="17" cy="9.200" rx="1" ry=".5"/></g>
<rect y="14" width="47" height="17" fill="url(#g3w)"/><rect y="13.600" width="47" height="1.500" fill="#8c3f1a"/>
<path d="M0 17h20l10 14H0z" fill="#e08a2a" opacity=".7"/><path d="M0 27H27L30 31H0z" fill="#9a3f10" opacity=".65"/>
<path d="M18 16.500 47 21.500V31H31z" fill="#5a2a10" opacity=".62"/><path d="M18 16.500 47 21.500" stroke="#2f1206" stroke-width="1"/><path d="M0 29.500h47V31H0z" fill="#6a2a0c" opacity=".8"/><path d="M2 17.800H20" stroke="#3a1a0c" stroke-width=".9"/><path d="M8.500 20.200h7l-.8 1.300H9.300z" fill="#3a1608"/><path d="M11 16v4.300" stroke="#3a1608" stroke-width=".6"/>
<path d="M23 19v4M27 20v4.500M31 21v5M35 21.500v6M39 22v7M43 22.500v7" stroke="#3a1808" stroke-width="1" opacity=".85"/><path d="M0 14.500h1.800v2.500H0z" fill="#4a200c"/><path d="M3 18v2.500" stroke="#3a1608" stroke-width=".8"/></g></svg></div>
<div class="a lp" style="left:410.400px;top:316.8px;width:66.3px"></div><div class="a t ct" id="l3" style="left:429.200px;top:317.5px">Jon Snow</div>
<svg class="a" style="left:410px;top:316px" width="15" height="14" viewBox="410 316 15 14"><circle cx="416.600" cy="322.8" r="6" fill="#f3f3f3"/><g stroke-width="1.050" stroke-linecap="round"><line x1="416" y1="319.9" x2="418.600" y2="318.2" stroke="#2e96de"/><line x1="415.900" y1="321.4" x2="418.700" y2="319.6" stroke="#ea5348"/><line x1="416.700" y1="322.2" x2="419.400" y2="320.5" stroke="#f8c331"/><line x1="416.800" y1="323.6" x2="419.400" y2="321.9" stroke="#4fb14f"/></g><line x1="411.800" y1="325.9" x2="424" y2="325.9" stroke="#8a8a8a" stroke-width=".8" stroke-dasharray="1 .600"/></svg>
<div class="a t ct" id="f3_0" style="left:532.800px;top:317.00px">Don't miss these s</div>
<div class="a t ct" id="f3_1" style="left:532.800px;top:330.85px">view</div>
<div class="a t rn" style="left:46px;top:379.4px;width:13px;text-align:center">5</div>
<div class="a t ct" id="n4" style="left:88px;top:364.9px">Taj Mahal</div>
<div class="a pill p" style="left:203.300px;top:363.3px;width:63.2px"><span id="s4">In progress</span></div>
<div class="a th" id="th4" style="top:366px;width:48px"><svg width="48" height="31" viewBox="0 0 48 31" style="display:block;border-radius:2px"><g filter="url(#b5)"><rect width="48" height="20" fill="url(#g5s)"/><path d="M0 8c8-2 14 1 22-1M30 5c6 1 12-1 18 0" stroke="#eef4fa" stroke-width="2" fill="none" opacity=".7"/>
<rect y="19" width="48" height="12" fill="#64a636"/><path d="M0 19h48v1.800H0z" fill="#3c6a30"/>
<g fill="#f1ede5"><rect x="6.700" y="3.300" width="1.600" height="16"/><rect x="40.200" y="3.300" width="1.600" height="16"/><rect x="13.500" y="9.300" width="1.100" height="9.500"/><rect x="33.600" y="9.300" width="1.100" height="9.500"/>
<path d="M16.500 19V10.500h15V19z"/><path d="M19.800 10.500c-.6-4 1.600-7.300 4.200-8.300 2.600 1 4.800 4.300 4.200 8.300z"/><circle cx="18.600" cy="9.200" r="1.300"/><circle cx="29.400" cy="9.200" r="1.300"/><rect x="15" y="17.300" width="18" height="2.200"/></g>
<path d="M22.700 19V13.500a1.300 1.300 0 0 1 2.600 0V19z" fill="#cfc3b0"/><path d="M17.500 12.500h2v5.500h-2zM28.500 12.500h2v5.500h-2z" fill="#ddd3c2"/><path d="M6.700 3.300h1.600M40.200 3.300h1.600" stroke="#b9b3a6" stroke-width=".8"/>
<g fill="#2b5b2a"><ellipse cx="3.600" cy="19.300" rx="1" ry="4.200"/><ellipse cx="11.200" cy="19.800" rx=".8" ry="3"/><ellipse cx="45" cy="19.800" rx="1" ry="4"/><ellipse cx="36.500" cy="19.500" rx=".7" ry="2.500"/></g>
<path d="M22 20 0 29.500V31H9.500z" fill="#c79386"/><path d="M26 20 48 29.500V31H38.500z" fill="#b98275"/><path d="M22.300 20 7 31h4L23 20zM25.700 20 41 31h-4L25 20z" fill="#e6dccf" opacity=".8"/>
<path d="M23 19.800h2L37.500 31h-27z" fill="url(#g5p)"/><path d="M23.600 21 24 29.500 24.400 21z" fill="#e8f6ef" opacity=".6"/></g></svg></div>
<div class="a lp" style="left:410.400px;top:364.8px;width:73px"></div><div class="a t ct" id="l4" style="left:429.200px;top:365.5px">Anjali Daga</div>
<svg class="a" style="left:410.500px;top:363.3px" width="15" height="15" viewBox="0 0 15 15"><defs><clipPath id="ac"><circle cx="7.600" cy="7.400" r="7.200"/></clipPath></defs><circle cx="7.600" cy="7.400" r="7.200" fill="#a45ff0"/><g clip-path="url(#ac)" fill="#fff"><circle cx="7.600" cy="5.200" r="2.400"/><ellipse cx="7.600" cy="11.700" rx="4.800" ry="2.700"/></g></svg>
<div class="a t ct" id="f4_0" style="left:532.800px;top:365.00px">A botanical garden</div>
<div class="a t ct" id="f4_1" style="left:532.800px;top:378.85px">cheer you up, no m</div>
<div class="a t ct" id="f4_2" style="left:532.800px;top:392.70px">what.</div>
<div class="a t rn" style="left:46px;top:427.4px;width:13px;text-align:center">6</div>
<div class="a t ct" id="n5" style="left:88px;top:412.9px">Best National Park</div>
<div class="a pill p" style="left:203.300px;top:411.3px;width:63.2px"><span id="s5">In progress</span></div>
<div class="a th" id="th5" style="top:414px;width:42px"><svg width="42" height="31" viewBox="0 0 42 31" style="display:block;border-radius:2px"><g filter="url(#b5)"><rect width="42" height="31" fill="#dfe7ee"/><path d="M9 0h12v4c-4 2-9 1-12-1z" fill="#c9d3dc"/><ellipse cx="16.500" cy="6.500" rx="3.600" ry="3" fill="#a9b2bd"/><ellipse cx="26" cy="6" rx="4" ry="2.600" fill="#9fc0e8" opacity=".8"/><ellipse cx="32" cy="2.500" rx="5" ry="1.300" fill="#bfc6cf"/><path d="M0 0h10L8 7 0 9z" fill="#8fa9bb" opacity=".85"/><ellipse cx="25" cy="11.500" rx="4" ry="1.800" fill="#c9cbd6"/>
<path d="M0 7 6 10 14 13.500 20 14.500 26 16.500V21H0z" fill="#356f86"/><path d="M0 12 10 15 22 16.500V21H0z" fill="#2b6a6a"/>
<path d="M42 3 38 6 33 11 27 14.500 24 17.500V22H42z" fill="#2c9452"/><path d="M42 0 37 2.500 36.500 5 39.500 5 42 8z" fill="#55604f" opacity=".85"/><path d="M42 9 36 15 42 19z" fill="#1f6f45"/>
<rect y="17.500" width="42" height="4.500" fill="#1d4a22"/><path d="M16 19.300h9.500v1.300H16z" fill="#d9cfc8"/><path d="M19 18.500h4v1h-4z" fill="#c9a8a0"/>
<rect y="21" width="42" height="10" fill="#2f9424"/><ellipse cx="33.3" cy="29.3" rx="1.4" ry="0.8" fill="#1d5f1f" opacity="0.85"/><ellipse cx="1.5" cy="22.9" rx="1.5" ry="0.9" fill="#3fae2c" opacity="0.85"/><ellipse cx="15.7" cy="28.8" rx="1.1" ry="0.7" fill="#2f8f24" opacity="0.85"/><ellipse cx="30.7" cy="25.4" rx="1.4" ry="0.8" fill="#3fae2c" opacity="0.85"/><ellipse cx="4.0" cy="26.9" rx="1.6" ry="0.9" fill="#3fae2c" opacity="0.85"/><ellipse cx="11.2" cy="29.1" rx="1.6" ry="0.9" fill="#73d63e" opacity="0.85"/><ellipse cx="14.1" cy="22.4" rx="1.7" ry="1.0" fill="#1d5f1f" opacity="0.85"/><ellipse cx="18.7" cy="22.4" rx="1.1" ry="0.6" fill="#3fae2c" opacity="0.85"/><ellipse cx="33.4" cy="22.4" rx="0.9" ry="0.5" fill="#2f8f24" opacity="0.85"/><ellipse cx="34.8" cy="30.2" rx="1.4" ry="0.8" fill="#2f8f24" opacity="0.85"/><ellipse cx="21.6" cy="27.6" rx="1.6" ry="0.9" fill="#174a1a" opacity="0.85"/><ellipse cx="41.0" cy="21.8" rx="1.2" ry="0.7" fill="#174a1a" opacity="0.85"/><ellipse cx="18.0" cy="24.9" rx="1.0" ry="0.6" fill="#174a1a" opacity="0.85"/><ellipse cx="37.0" cy="26.5" rx="1.0" ry="0.6" fill="#3fae2c" opacity="0.85"/><ellipse cx="11.3" cy="28.3" rx="1.3" ry="0.7" fill="#2f8f24" opacity="0.85"/><ellipse cx="5.8" cy="23.5" rx="1.8" ry="1.0" fill="#3fae2c" opacity="0.85"/><ellipse cx="21.9" cy="23.3" rx="1.0" ry="0.6" fill="#3fae2c" opacity="0.85"/><ellipse cx="14.0" cy="30.1" rx="1.5" ry="0.9" fill="#1d5f1f" opacity="0.85"/><ellipse cx="15.7" cy="26.5" rx="1.2" ry="0.7" fill="#3fae2c" opacity="0.85"/><ellipse cx="42.0" cy="22.0" rx="1.3" ry="0.8" fill="#3fae2c" opacity="0.85"/><ellipse cx="41.9" cy="22.4" rx="1.3" ry="0.8" fill="#55c52e" opacity="0.85"/><ellipse cx="37.5" cy="27.9" rx="1.8" ry="1.0" fill="#73d63e" opacity="0.85"/><ellipse cx="32.9" cy="25.1" rx="0.9" ry="0.5" fill="#73d63e" opacity="0.85"/><ellipse cx="19.8" cy="28.2" rx="1.3" ry="0.7" fill="#55c52e" opacity="0.85"/><ellipse cx="8.1" cy="28.0" rx="1.3" ry="0.8" fill="#3fae2c" opacity="0.85"/><ellipse cx="32.9" cy="23.1" rx="0.9" ry="0.5" fill="#55c52e" opacity="0.85"/><ellipse cx="10.5" cy="29.1" rx="1.1" ry="0.6" fill="#174a1a" opacity="0.85"/><ellipse cx="19.0" cy="30.3" rx="1.1" ry="0.6" fill="#73d63e" opacity="0.85"/><ellipse cx="38.9" cy="25.5" rx="1.4" ry="0.8" fill="#174a1a" opacity="0.85"/><ellipse cx="19.9" cy="26.0" rx="1.0" ry="0.6" fill="#73d63e" opacity="0.85"/><ellipse cx="20.9" cy="27.5" rx="1.4" ry="0.8" fill="#1d5f1f" opacity="0.85"/><ellipse cx="27.7" cy="30.7" rx="1.9" ry="1.1" fill="#73d63e" opacity="0.85"/><ellipse cx="29.2" cy="24.0" rx="1.6" ry="0.9" fill="#73d63e" opacity="0.85"/><ellipse cx="30.6" cy="23.0" rx="1.8" ry="1.0" fill="#174a1a" opacity="0.85"/><ellipse cx="0.3" cy="25.8" rx="0.9" ry="0.5" fill="#55c52e" opacity="0.85"/><ellipse cx="25.6" cy="26.9" rx="1.6" ry="0.9" fill="#1d5f1f" opacity="0.85"/><ellipse cx="15.2" cy="30.4" rx="1.8" ry="1.0" fill="#55c52e" opacity="0.85"/><ellipse cx="38.6" cy="23.0" rx="1.1" ry="0.7" fill="#55c52e" opacity="0.85"/><ellipse cx="17.7" cy="28.9" rx="1.8" ry="1.0" fill="#73d63e" opacity="0.85"/><ellipse cx="3.2" cy="23.7" rx="1.3" ry="0.7" fill="#2f8f24" opacity="0.85"/><ellipse cx="28.6" cy="23.8" rx="1.2" ry="0.7" fill="#55c52e" opacity="0.85"/><ellipse cx="26.4" cy="22.4" rx="1.0" ry="0.5" fill="#3fae2c" opacity="0.85"/><ellipse cx="20.1" cy="28.4" rx="0.9" ry="0.5" fill="#55c52e" opacity="0.85"/><ellipse cx="29.5" cy="22.7" rx="1.8" ry="1.0" fill="#55c52e" opacity="0.85"/><ellipse cx="6.8" cy="27.5" rx="1.1" ry="0.6" fill="#3fae2c" opacity="0.85"/><ellipse cx="19.0" cy="28.1" rx="1.7" ry="1.0" fill="#2f8f24" opacity="0.85"/><ellipse cx="34.4" cy="23.3" rx="1.9" ry="1.1" fill="#73d63e" opacity="0.85"/><ellipse cx="32.7" cy="25.7" rx="1.1" ry="0.7" fill="#3fae2c" opacity="0.85"/><ellipse cx="24.3" cy="29.4" rx="1.2" ry="0.7" fill="#1d5f1f" opacity="0.85"/><ellipse cx="12.0" cy="30.4" rx="0.9" ry="0.5" fill="#1d5f1f" opacity="0.85"/><ellipse cx="11.8" cy="30.7" rx="1.3" ry="0.8" fill="#1d5f1f" opacity="0.85"/><ellipse cx="1.3" cy="22.3" rx="1.8" ry="1.0" fill="#3fae2c" opacity="0.85"/><ellipse cx="10.0" cy="28.6" rx="1.7" ry="1.0" fill="#1d5f1f" opacity="0.85"/><ellipse cx="15.6" cy="22.0" rx="2.0" ry="1.1" fill="#2f8f24" opacity="0.85"/><ellipse cx="29.4" cy="24.8" rx="0.9" ry="0.5" fill="#3fae2c" opacity="0.85"/><ellipse cx="13.6" cy="15.1" rx="1.5" ry="0.8" fill="#1d4f2a" opacity="0.7"/><ellipse cx="34.5" cy="14.7" rx="1.4" ry="0.8" fill="#2a7a4a" opacity="0.7"/><ellipse cx="1.6" cy="17.0" rx="0.9" ry="0.5" fill="#1d4f2a" opacity="0.7"/><ellipse cx="23.1" cy="14.4" rx="1.4" ry="0.8" fill="#2a7a4a" opacity="0.7"/><ellipse cx="26.5" cy="18.1" rx="0.9" ry="0.5" fill="#3a8a6a" opacity="0.7"/><ellipse cx="2.1" cy="15.5" rx="1.4" ry="0.8" fill="#2a7a4a" opacity="0.7"/><ellipse cx="12.2" cy="15.0" rx="1.0" ry="0.5" fill="#18402a" opacity="0.7"/><ellipse cx="23.5" cy="18.8" rx="0.9" ry="0.5" fill="#2a7a4a" opacity="0.7"/><ellipse cx="15.6" cy="17.8" rx="0.9" ry="0.5" fill="#1d4f2a" opacity="0.7"/><ellipse cx="26.0" cy="17.5" rx="1.4" ry="0.8" fill="#18402a" opacity="0.7"/><ellipse cx="19.6" cy="20.5" rx="1.2" ry="0.7" fill="#2a7a4a" opacity="0.7"/><ellipse cx="33.4" cy="18.9" rx="1.1" ry="0.6" fill="#18402a" opacity="0.7"/><ellipse cx="22.1" cy="20.1" rx="1.6" ry="0.9" fill="#18402a" opacity="0.7"/><ellipse cx="25.6" cy="14.5" rx="1.3" ry="0.8" fill="#2a7a4a" opacity="0.7"/><ellipse cx="31.8" cy="15.1" rx="1.3" ry="0.8" fill="#1d4f2a" opacity="0.7"/><ellipse cx="40.4" cy="14.5" rx="1.4" ry="0.8" fill="#18402a" opacity="0.7"/><ellipse cx="14.3" cy="16.5" rx="1.3" ry="0.8" fill="#3a8a6a" opacity="0.7"/><ellipse cx="2.9" cy="14.7" rx="1.1" ry="0.6" fill="#1d4f2a" opacity="0.7"/></g></svg></div>
<div class="a lp" style="left:410.400px;top:412.8px;width:66.3px"></div><div class="a t ct" id="l5" style="left:429.200px;top:413.5px">Jon Snow</div>
<svg class="a" style="left:410px;top:412px" width="15" height="14" viewBox="410 412 15 14"><circle cx="416.600" cy="418.8" r="6" fill="#f3f3f3"/><g stroke-width="1.050" stroke-linecap="round"><line x1="416" y1="415.9" x2="418.600" y2="414.2" stroke="#2e96de"/><line x1="415.900" y1="417.4" x2="418.700" y2="415.6" stroke="#ea5348"/><line x1="416.700" y1="418.2" x2="419.400" y2="416.5" stroke="#f8c331"/><line x1="416.800" y1="419.6" x2="419.400" y2="417.9" stroke="#4fb14f"/></g><line x1="411.800" y1="421.9" x2="424" y2="421.9" stroke="#8a8a8a" stroke-width=".8" stroke-dasharray="1 .600"/></svg>
<div class="a t ct" id="f5_0" style="letter-spacing:.06px;left:532.800px;top:413.00px">Shopping at Harrods</div>
<div class="a t ct" id="f5_1" style="left:532.800px;top:426.85px">the lowest price</div>
<svg class="a" style="left:107.300px;top:462.500px" width="8" height="8" viewBox="0 0 9 9" stroke="#858585" stroke-width="2"><path d="M4.500 .8v7.400M.8 4.500h7.400"/></svg>
<div class="a" style="left:609.300px;top:111px;width:5.700px;height:443px;background:#fcebc8"></div>
<svg class="a" style="left:609px;top:416px" width="5" height="16" viewBox="0 0 5 16" fill="#222"><circle cx="2.500" cy="3" r="1.100"/><circle cx="2.500" cy="8" r="1.100"/><circle cx="2.500" cy="13" r="1.100"/></svg>
<!--PANEL-->
<div class="a" style="left:615px;top:111px;width:518px;height:443px;background:#fff"></div>
<div class="a" style="left:615px;top:111px;width:518px;height:29px;background:#f5f5f5"></div>
<div class="a" style="left:615px;top:140px;width:518px;height:1px;background:#dedede"></div>
<svg class="a" style="left:630px;top:120.500px" width="12" height="10" viewBox="0 0 12 10"><path d="M.6 9.300A5.500 5.500 0 0 1 6 .6a5.500 5.500 0 0 1 5.400 8.700z" fill="#666"/><circle cx="6" cy="6.800" r="1.300" fill="#f5f5f5"/><path d="M6 6.800 8 3.400" stroke="#f5f5f5" stroke-width="1"/><circle cx="2.600" cy="5.800" r=".7" fill="#f5f5f5"/><circle cx="3.800" cy="3.300" r=".7" fill="#f5f5f5"/><circle cx="6.200" cy="2.300" r=".7" fill="#f5f5f5"/><circle cx="9.500" cy="5.800" r=".7" fill="#f5f5f5"/></svg>
<div class="a t" id="pTitle" style="left:648.800px;top:119.800px;font-size:11.31px;color:#555;-webkit-text-stroke:.3px #555">Content Operations Dashboard</div>
<svg class="a" style="left:812.4px;top:123.5px" width="8" height="5" viewBox="0 0 8 5"><path d="M1 .6h6L4 4.200z" fill="#444"/></svg>
<svg class="a" style="left:1003.500px;top:121.500px" width="9" height="9" viewBox="0 0 9 9" stroke="#555" stroke-width="1.500"><path d="M4.500 .8v7.400M.8 4.500h7.400"/></svg>
<div class="a t" id="addapp" style="left:1020.300px;top:121px;font-size:9.67px;color:#333;-webkit-text-stroke:.15px #333">Add an App</div>
<svg class="a" style="left:1092.7px;top:121.0px" width="9.6" height="9.6" viewBox="1 1 8 8"><path d="M2.500 7.500 4.450 5.550M5.550 4.450 7.500 2.500" stroke="#222" stroke-width="1.150" fill="none"/><path d="M5.700 1.100H8.900V4.300zM1.100 5.700V8.900H4.300z" fill="#222"/></svg>
<svg class="a" style="left:1113.300px;top:122px" width="9" height="9" viewBox="0 0 9 9" stroke="#222" stroke-width="2.400" stroke-linecap="round"><path d="M1.600 1.600 7.400 7.400M7.400 1.600 1.600 7.400"/></svg>
<div class="a card" style="left:624.5px;top:153px;width:486.5px;height:111px;border-color:#c6c6c6"></div>
<div class="a t ctt" id="c1t" style="left:637.300px;top:165.500px">Total Content Campaigns Pending</div>
<svg class="a" style="left:819px;top:168.8px" width="8" height="5" viewBox="0 0 8 5"><path d="M1 .6h6L4 4.200z" fill="#333"/></svg>
<svg class="a" style="left:863.3px;top:165px" width="8" height="12" viewBox="0 0 8 12" fill="#cfcfcf"><path d="M4 .3 5.800 2.300H2.200z"/><rect x=".5" y="3.600" width="7" height="1"/><rect x=".5" y="5.500" width="7" height="1"/><rect x=".5" y="7.400" width="7" height="1"/><path d="M4 11.700 5.800 9.700H2.200z"/></svg>
<svg class="a" style="left:1088.5px;top:165.5px" width="9.6" height="9.6" viewBox="1 1 8 8"><path d="M2.500 7.500 4.450 5.550M5.550 4.450 7.500 2.500" stroke="#222" stroke-width="1.150" fill="none"/><path d="M5.700 1.100H8.900V4.300zM1.100 5.700V8.900H4.300z" fill="#222"/></svg>
<svg class="a" style="left:1104px;top:257px" width="6" height="6" viewBox="0 0 6 6" fill="none" stroke="#555" stroke-width="1"><path d="M1 5h4V1"/></svg>
<div class="a t" id="seven" style="left:766.700px;width:200px;text-align:center;top:183.600px;font-family:'Liberation Serif',serif;font-weight:700;font-size:47px;color:#1300fb">7</div>
<div class="a t" id="totc" style="left:717.500px;width:300px;text-align:center;top:234px;font-family:'Liberation Serif',serif;font-weight:700;font-size:15.500px;letter-spacing:-.34px;color:#757575"><span id="totcs">TOTAL CAMPAIGNS</span></div>
<div class="a card" style="left:624.5px;top:277px;width:486.5px;height:235px;border-color:#c6c6c6"></div>
<div class="a t ctt" id="c2t" style="left:637.300px;top:289.200px">Content By Lead</div>
<svg class="a" style="left:729.5px;top:292.5px" width="8" height="5" viewBox="0 0 8 5"><path d="M1 .6h6L4 4.200z" fill="#333"/></svg>
<svg class="a" style="left:863.3px;top:288px" width="8" height="12" viewBox="0 0 8 12" fill="#cfcfcf"><path d="M4 .3 5.800 2.300H2.200z"/><rect x=".5" y="3.600" width="7" height="1"/><rect x=".5" y="5.500" width="7" height="1"/><rect x=".5" y="7.400" width="7" height="1"/><path d="M4 11.700 5.800 9.700H2.200z"/></svg>
<svg class="a" style="left:1088.5px;top:289.7px" width="9.6" height="9.6" viewBox="1 1 8 8"><path d="M2.500 7.500 4.450 5.550M5.550 4.450 7.500 2.500" stroke="#222" stroke-width="1.150" fill="none"/><path d="M5.700 1.100H8.900V4.300zM1.100 5.700V8.900H4.300z" fill="#222"/></svg>
<svg class="a" style="left:1104px;top:505px" width="6" height="6" viewBox="0 0 6 6" fill="none" stroke="#555" stroke-width="1"><path d="M1 5h4V1"/></svg>
<svg class="a" style="left:625px;top:278px" width="485" height="233" viewBox="625 278 485 233" font-family="Liberation Sans,sans-serif">
<rect x="684.7" y="334.6" width="306.5" height="1" fill="#cccccc"/><rect x="684.7" y="356.4" width="306.5" height="1" fill="#ebebeb"/><rect x="684.7" y="378.1" width="306.5" height="1" fill="#cccccc"/><rect x="684.7" y="399.9" width="306.5" height="1" fill="#ebebeb"/><rect x="684.7" y="421.7" width="306.5" height="1" fill="#cccccc"/><rect x="684.7" y="443.4" width="306.5" height="1" fill="#ebebeb"/><rect x="704.3" y="335.1" width="63" height="87.1" fill="#dc3912"/><rect x="704.3" y="422.3" width="63" height="43.5" fill="#3366cc"/><rect x="806.5" y="335.1" width="63" height="130.6" fill="#dc3912"/><rect x="908.6" y="422.3" width="63" height="43.5" fill="#ff9900"/><rect x="684.7" y="465.2" width="306.5" height="1" fill="#333"/>
<text x="675.300" y="338.0" font-size="9.720" text-anchor="end" fill="#444">3</text><text x="675.300" y="381.4" font-size="9.720" text-anchor="end" fill="#444">2</text><text x="675.300" y="425.2" font-size="9.720" text-anchor="end" fill="#444">1</text><text x="675.300" y="468.6" font-size="9.720" text-anchor="end" fill="#444">0</text><text x="735.8" y="476.700" font-size="9.720" text-anchor="middle" fill="#222">In progress</text><text x="838.0" y="476.700" font-size="9.720" text-anchor="middle" fill="#222">Live</text><text x="940.1" y="476.700" font-size="9.720" text-anchor="middle" fill="#222">On hold</text><text x="838.0" y="487" font-size="9.720" font-style="italic" text-anchor="middle" fill="#222">Status</text><text transform="translate(654,400.300) rotate(-90)" font-size="9.720" font-style="italic" text-anchor="middle" fill="#222">Total Campaigns</text>
<rect x="1001" y="380.1" width="19.500" height="9" fill="#ff9900"/><text x="1024.500" y="388.4" font-size="9.720" fill="#222">Ryan Ethan</text><rect x="1001" y="396.0" width="19.500" height="9" fill="#dc3912"/><text x="1024.500" y="404.3" font-size="9.720" fill="#222">Jon Snow</text><rect x="1001" y="411.9" width="19.500" height="9" fill="#3366cc"/><text x="1024.500" y="420.2" font-size="9.720" fill="#222">Anjali Daga</text></svg>
<div class="a card" style="left:624.5px;top:525.3px;width:486.5px;height:60px;border-color:#2f7df6"></div>
<div class="a t ctt" id="c3t" style="left:637.300px;top:536.500px">GoalTracker</div>
<svg class="a" style="left:707px;top:540.5px" width="8" height="5" viewBox="0 0 8 5"><path d="M1 .6h6L4 4.200z" fill="#333"/></svg>
<svg class="a" style="left:863.3px;top:537px" width="8" height="12" viewBox="0 0 8 12" fill="#cfcfcf"><path d="M4 .3 5.800 2.300H2.200z"/><rect x=".5" y="3.600" width="7" height="1"/><rect x=".5" y="5.500" width="7" height="1"/><rect x=".5" y="7.400" width="7" height="1"/><path d="M4 11.700 5.800 9.700H2.200z"/></svg>
<svg class="a" style="left:1088.5px;top:538.2px" width="9.6" height="9.6" viewBox="1 1 8 8"><path d="M2.500 7.500 4.450 5.550M5.550 4.450 7.500 2.500" stroke="#222" stroke-width="1.150" fill="none"/><path d="M5.700 1.100H8.900V4.300zM1.100 5.700V8.900H4.300z" fill="#222"/></svg>
</div></div>
</body></html>
